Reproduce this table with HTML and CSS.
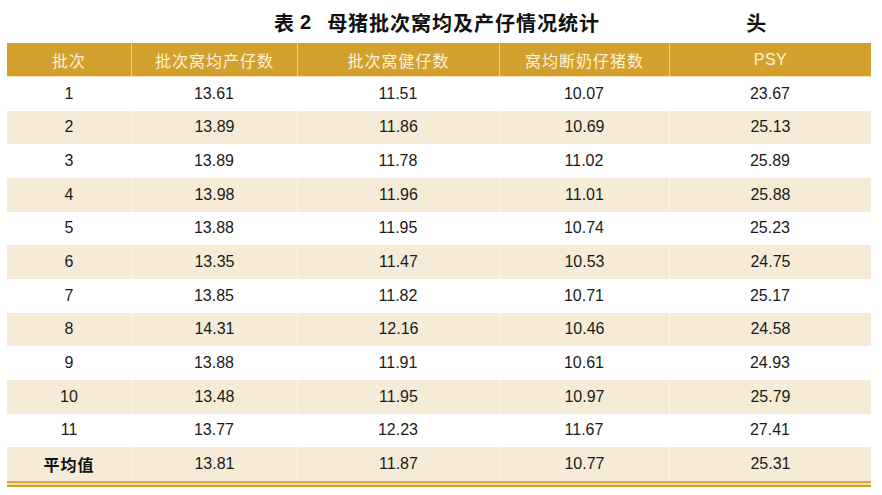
FILE: index.html
```html
<!DOCTYPE html>
<html lang="zh">
<head>
<meta charset="utf-8">
<title>表2 母猪批次窝均及产仔情况统计</title>
<link rel="stylesheet" href="styles.css">
</head>
<body>
<div class="wrap">
  <div class="title-row">
    <span class="title"><span class="t1">表</span><span class="t2">2</span><span class="t3">母猪批次窝均及产仔情况统计</span></span>
    <span class="unit">头</span>
  </div>
  <div class="table">
    <div class="row head">
      <div class="c">批次</div><div class="c">批次窝均产仔数</div><div class="c">批次窝健仔数</div><div class="c">窝均断奶仔猪数</div><div class="c psy">PSY</div>
    </div>
    <div class="row"><div class="c">1</div><div class="c">13.61</div><div class="c">11.51</div><div class="c">10.07</div><div class="c">23.67</div></div>
    <div class="row alt"><div class="c">2</div><div class="c">13.89</div><div class="c">11.86</div><div class="c">10.69</div><div class="c">25.13</div></div>
    <div class="row"><div class="c">3</div><div class="c">13.89</div><div class="c">11.78</div><div class="c">11.02</div><div class="c">25.89</div></div>
    <div class="row alt"><div class="c">4</div><div class="c">13.98</div><div class="c">11.96</div><div class="c">11.01</div><div class="c">25.88</div></div>
    <div class="row"><div class="c">5</div><div class="c">13.88</div><div class="c">11.95</div><div class="c">10.74</div><div class="c">25.23</div></div>
    <div class="row alt"><div class="c">6</div><div class="c">13.35</div><div class="c">11.47</div><div class="c">10.53</div><div class="c">24.75</div></div>
    <div class="row"><div class="c">7</div><div class="c">13.85</div><div class="c">11.82</div><div class="c">10.71</div><div class="c">25.17</div></div>
    <div class="row alt"><div class="c">8</div><div class="c">14.31</div><div class="c">12.16</div><div class="c">10.46</div><div class="c">24.58</div></div>
    <div class="row"><div class="c">9</div><div class="c">13.88</div><div class="c">11.91</div><div class="c">10.61</div><div class="c">24.93</div></div>
    <div class="row alt"><div class="c">10</div><div class="c">13.48</div><div class="c">11.95</div><div class="c">10.97</div><div class="c">25.79</div></div>
    <div class="row"><div class="c">11</div><div class="c">13.77</div><div class="c">12.23</div><div class="c">11.67</div><div class="c">27.41</div></div>
    <div class="row alt"><div class="c avg">平均值</div><div class="c">13.81</div><div class="c">11.87</div><div class="c">10.77</div><div class="c">25.31</div></div>
    <div class="double-rule"></div>
  </div>
</div>
</body>
</html>
```
FILE: styles.css
```css
html, body {
  margin: 0;
  padding: 0;
  background: #ffffff;
}
body {
  font-family: "Liberation Sans", Arial, "Noto Sans CJK SC", sans-serif;
  color: #1a1a1a;
}
.wrap {
  width: 864px;
  margin-left: 7px;
}
.title-row {
  height: 43px;
  display: flex;
  align-items: center;
  padding-left: 267px;
  box-sizing: border-box;
  font-family: "Noto Sans CJK SC", sans-serif;
  font-weight: bold;
  font-size: 20px;
  color: #111;
  padding-top: 2px;
}
.title {
  display: flex;
  align-items: center;
}
.t2 {
  font-family: "Liberation Sans", Arial, sans-serif;
  margin-left: 6px;
  margin-right: 16px;
}
.t3 {
  letter-spacing: 1px;
}
.unit {
  margin-left: 146px;
}
.table {
  width: 864px;
}
.row {
  display: grid;
  grid-template-columns: 124px 166px 202px 170px 202px;
  height: 33.67px;
  font-size: 16px;
}
.row.head {
  height: 34px;
  background: #d4a02d;
  color: #fdf3dc;
  font-family: "Noto Sans CJK SC", sans-serif;
  letter-spacing: 1px;
  border-bottom: 1px solid #f7e3b2;
  box-sizing: border-box;
}
.row.head .c + .c {
  border-left: 1px solid #f0cf7f;
}
.row.head .psy {
  font-family: "Liberation Sans", Arial, sans-serif;
  letter-spacing: 0.5px;
}
.row.alt {
  background: #f6ebd7;
}
.row.alt .c + .c {
  border-left: 1px solid #fcf7ee;
}
.c {
  display: flex;
  align-items: center;
  justify-content: center;
  box-sizing: border-box;
}
.avg {
  font-family: "Noto Sans CJK SC", sans-serif;
  font-weight: bold;
  letter-spacing: 1px;
  color: #111;
}
.double-rule {
  height: 6px;
  border-top: 2.5px solid #dfa73a;
  border-bottom: 2.5px solid #d39e2c;
  background: #f4dca6;
  box-sizing: border-box;
}
```
